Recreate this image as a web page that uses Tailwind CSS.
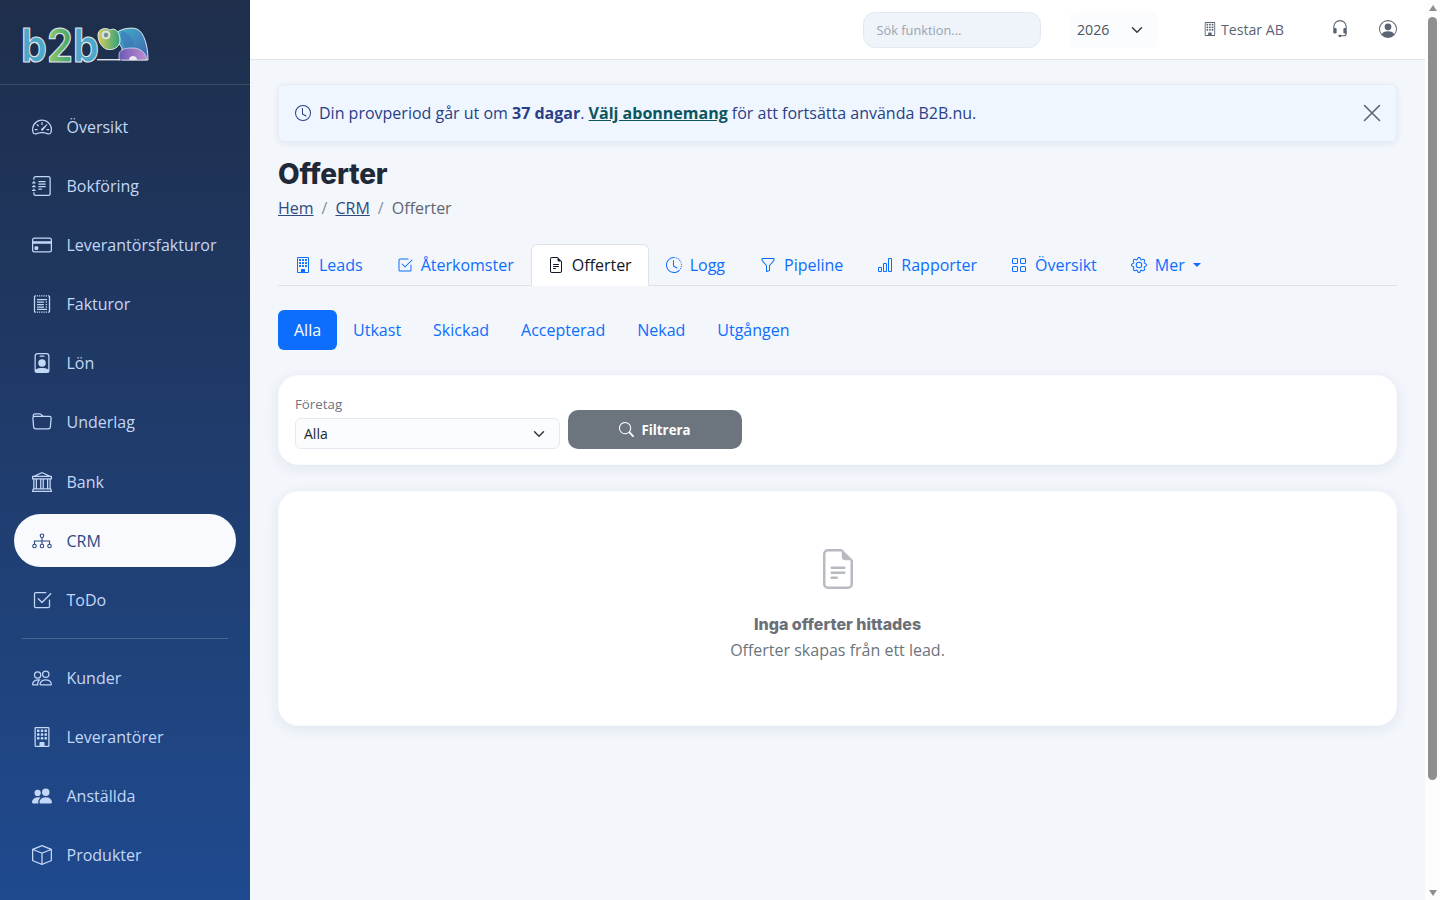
<!DOCTYPE html>
<html lang="sv">
<head>
<meta charset="utf-8">
<title>Offerter</title>
<script src="https://cdn.jsdelivr.net/npm/@tailwindcss/browser@4"></script>
</head>
<body class="font-['Open_Sans',sans-serif] bg-[#f3f6fb]">
<div class="flex h-[900px] w-[1440px] overflow-hidden">

  <!-- Sidebar -->
  <aside class="w-[250px] h-full shrink-0 bg-gradient-to-b from-[#1e2e4b] to-[#1f4a8f] overflow-hidden">
    <div class="h-[85px] border-b border-[#3d4d67] pl-[18px] pt-[13px]">
      <svg width="134" height="64" viewBox="-4 -12 134 64">
        <defs>
          <linearGradient id="lg1" x1="0" y1="0" x2="1" y2="0"><stop offset="0" stop-color="#4ea6c9"/><stop offset=".33" stop-color="#4ea6c9"/><stop offset=".38" stop-color="#8cc46a"/><stop offset=".64" stop-color="#3fa66f"/><stop offset=".68" stop-color="#4ea6c9"/><stop offset="1" stop-color="#4ea6c9"/></linearGradient>
          <linearGradient id="lg2" x1="0" y1="0" x2="1" y2="1"><stop offset="0" stop-color="#45b4c8"/><stop offset="1" stop-color="#3b62b0"/></linearGradient>
          <linearGradient id="lg3" x1="0" y1="0" x2="1" y2="0"><stop offset="0" stop-color="#d6cf56"/><stop offset="1" stop-color="#2f9f7d"/></linearGradient>
          <linearGradient id="lg4" x1="0" y1="0" x2="1" y2="0"><stop offset="0" stop-color="#6d58b8"/><stop offset="1" stop-color="#c08fd0"/></linearGradient>
        </defs>
        <text transform="scale(1.03 1.15)" x="-1" y="32" font-family="Inter, sans-serif" font-weight="700" font-size="40" fill="url(#lg1)" stroke="#dfe5ea" stroke-width="1" stroke-linejoin="round">b2b</text>
        <g transform="translate(0 1)">
          <path d="M92 10 C96 2 110 1 115 3 C122 6 126 20 126 34 L100 34 L100 22 Z" fill="url(#lg2)" stroke="#dfe5ea" stroke-width="1"/>
          <path d="M100 5 C108 8 112 14 112 22 L104 24 L98 10 Z" fill="#3a73b8" opacity=".55"/>
          <path d="M76 9 C76 3 83 1 88 4 C93 1 98 6 98 14 C98 22 90 25 84 23 C80 21 76 16 76 9 Z" fill="url(#lg3)" stroke="#dfe5ea" stroke-width="1"/>
          <circle cx="84" cy="9" r="4" fill="#d8e0c4" stroke="#dfe5ea" stroke-width="1"/>
          <circle cx="84" cy="9" r="2.2" fill="#6f8fa0"/>
          <path d="M97 34 L97 29 C97 24 102 22 110 22 C119 22 124 27 125 34 Z" fill="url(#lg4)" stroke="#dfe5ea" stroke-width=".7"/>
          <path d="M107 34 C107 31 109 30 111 30 C113 30 115 31 115 34 Z" fill="#e9e9ef"/>
          <path d="M75 33.7 L98 33.7" stroke="#dfe5ea" stroke-width="1.4"/>
        </g>
      </svg>
    </div>
    <nav class="px-[14px] pt-[15.1px] text-[16px] text-[#c3d7f7]">
      <a class="flex items-center h-[53.15px] mb-[6px] pl-[18px]">
        <svg class="mr-[14.5px]" width="20" height="20" viewBox="0 0 16 16" fill="currentColor"><path d="M8 4a.5.5 0 0 1 .5.5V6a.5.5 0 0 1-1 0V4.5A.5.5 0 0 1 8 4M3.732 5.732a.5.5 0 0 1 .707 0l.915.914a.5.5 0 1 1-.708.708l-.914-.915a.5.5 0 0 1 0-.707M2 10a.5.5 0 0 1 .5-.5h1.586a.5.5 0 0 1 0 1H2.5A.5.5 0 0 1 2 10m9.5 0a.5.5 0 0 1 .5-.5h1.5a.5.5 0 0 1 0 1H12a.5.5 0 0 1-.5-.5m.754-4.246a.39.39 0 0 0-.527-.02L7.547 9.31a.91.91 0 1 0 1.302 1.258l3.434-4.297a.39.39 0 0 0-.029-.518z"/><path fill-rule="evenodd" d="M0 10a8 8 0 1 1 15.547 2.661c-.442 1.253-1.845 1.602-2.932 1.25C11.309 13.488 9.475 13 8 13c-1.474 0-3.31.488-4.615.911-1.087.352-2.49.003-2.932-1.25A8 8 0 0 1 0 10m8-7a7 7 0 0 0-6.603 9.329c.203.575.923.876 1.68.63C4.397 12.533 6.358 12 8 12s3.604.532 4.923.96c.757.245 1.477-.056 1.68-.631A7 7 0 0 0 8 3"/></svg>
        <span>Översikt</span>
      </a>
      <a class="flex items-center h-[53.15px] mb-[6px] pl-[18px]">
        <svg class="mr-[14.5px]" width="20" height="20" viewBox="0 0 16 16" fill="currentColor"><path d="M5 10.5a.5.5 0 0 1 .5-.5h2a.5.5 0 0 1 0 1h-2a.5.5 0 0 1-.5-.5m0-2a.5.5 0 0 1 .5-.5h5a.5.5 0 0 1 0 1h-5a.5.5 0 0 1-.5-.5m0-2a.5.5 0 0 1 .5-.5h5a.5.5 0 0 1 0 1h-5a.5.5 0 0 1-.5-.5m0-2a.5.5 0 0 1 .5-.5h5a.5.5 0 0 1 0 1h-5a.5.5 0 0 1-.5-.5"/><path d="M3 0h10a2 2 0 0 1 2 2v12a2 2 0 0 1-2 2H3a2 2 0 0 1-2-2v-1h1v1a1 1 0 0 0 1 1h10a1 1 0 0 0 1-1V2a1 1 0 0 0-1-1H3a1 1 0 0 0-1 1v1H1V2a2 2 0 0 1 2-2"/><path d="M1 5v-.5a.5.5 0 0 1 1 0V5h.5a.5.5 0 0 1 0 1h-2a.5.5 0 0 1 0-1zm0 3v-.5a.5.5 0 0 1 1 0V8h.5a.5.5 0 0 1 0 1h-2a.5.5 0 0 1 0-1zm0 3v-.5a.5.5 0 0 1 1 0v.5h.5a.5.5 0 0 1 0 1h-2a.5.5 0 0 1 0-1z"/></svg>
        <span>Bokföring</span>
      </a>
      <a class="flex items-center h-[53.15px] mb-[6px] pl-[18px]">
        <svg class="mr-[14.5px]" width="20" height="20" viewBox="0 0 16 16" fill="currentColor"><path d="M0 4a2 2 0 0 1 2-2h12a2 2 0 0 1 2 2v8a2 2 0 0 1-2 2H2a2 2 0 0 1-2-2zm2-1a1 1 0 0 0-1 1v1h14V4a1 1 0 0 0-1-1zm13 4H1v5a1 1 0 0 0 1 1h12a1 1 0 0 0 1-1z"/><path d="M2 10a1 1 0 0 1 1-1h1a1 1 0 0 1 1 1v1a1 1 0 0 1-1 1H3a1 1 0 0 1-1-1z"/></svg>
        <span>Leverantörsfakturor</span>
      </a>
      <a class="flex items-center h-[53.15px] mb-[6px] pl-[18px]">
        <svg class="mr-[14.5px]" width="20" height="20" viewBox="0 0 16 16" fill="none" stroke="currentColor"><path d="M2 1.5H14M2 14.5H14" stroke-width="1.1" stroke-dasharray="1 .8"/><path d="M2 1.5V14.5M14 1.5V14.5" stroke-width="1"/><path d="M4 4.5H12M4 6.5H9.5M4 8.5H9.5M4 10.5H9.5M4 12.3H12M11 6.5H12M11 8.5H12M11 10.5H12" stroke-width="1"/></svg>
        <span>Fakturor</span>
      </a>
      <a class="flex items-center h-[53.15px] mb-[6px] pl-[18px]">
        <svg class="mr-[14.5px]" width="20" height="20" viewBox="0 0 16 16" fill="currentColor"><path d="M6.5 2a.5.5 0 0 0 0 1h3a.5.5 0 0 0 0-1zM11 8a3 3 0 1 1-6 0 3 3 0 0 1 6 0"/><path d="M4.5 0A2.5 2.5 0 0 0 2 2.5V14a2 2 0 0 0 2 2h8a2 2 0 0 0 2-2V2.5A2.5 2.5 0 0 0 11.5 0zM3 2.5A1.5 1.5 0 0 1 4.5 1h7A1.5 1.5 0 0 1 13 2.5v10.795a4.2 4.2 0 0 0-.776-.492C11.392 12.387 10.063 12 8 12s-3.392.387-4.224.803a4.2 4.2 0 0 0-.776.492z"/></svg>
        <span>Lön</span>
      </a>
      <a class="flex items-center h-[53.15px] mb-[6px] pl-[18px]">
        <svg class="mr-[14.5px]" width="20" height="20" viewBox="0 0 16 16" fill="currentColor"><path d="M.54 3.87.5 3a2 2 0 0 1 2-2h3.672a2 2 0 0 1 1.414.586l.828.828A2 2 0 0 0 9.828 3h3.982a2 2 0 0 1 1.992 2.181l-.637 7A2 2 0 0 1 13.174 14H2.826a2 2 0 0 1-1.991-1.819l-.637-7a2 2 0 0 1 .342-1.31zM2.19 4a1 1 0 0 0-.996 1.09l.637 7a1 1 0 0 0 .995.91h10.348a1 1 0 0 0 .995-.91l.637-7A1 1 0 0 0 13.81 4zm4.69-1.707A1 1 0 0 0 6.172 2H2.5a1 1 0 0 0-1 .981l.006.139q.323-.119.684-.12h5.396z"/></svg>
        <span>Underlag</span>
      </a>
      <a class="flex items-center h-[53.15px] mb-[6px] pl-[18px]">
        <svg class="mr-[14.5px]" width="20" height="20" viewBox="0 0 16 16" fill="currentColor"><path d="m8 0 6.61 3h.89a.5.5 0 0 1 .5.5v2a.5.5 0 0 1-.5.5H15v7a.5.5 0 0 1 .485.38l.5 2a.498.498 0 0 1-.485.62H.5a.498.498 0 0 1-.485-.62l.5-2A.5.5 0 0 1 1 13V6H.5a.5.5 0 0 1-.5-.5v-2A.5.5 0 0 1 .5 3h.89zM3.777 3h8.447L8 1zM2 6v7h1V6zm2 0v7h2.5V6zm3.5 0v7h1V6zm2 0v7H12V6zM13 6v7h1V6zm2-1V4H1v1zm-.39 9H1.39l-.25 1h13.72z"/></svg>
        <span>Bank</span>
      </a>
      <a class="flex items-center h-[53.15px] mb-[6px] pl-[18px] rounded-full bg-[#f8fafd] text-[#2b4a85]">
        <svg class="mr-[14.5px]" width="20" height="20" viewBox="0 0 16 16" fill="none" stroke="currentColor" stroke-width=".9"><circle cx="8" cy="3.8" r="1.4"/><circle cx="2" cy="12" r="1.4"/><circle cx="8" cy="12" r="1.4"/><circle cx="14" cy="12" r="1.4"/><path d="M8 5.2V10.6M2 10.6V8H14V10.6"/></svg>
        <span class="font-medium">CRM</span>
      </a>
      <a class="flex items-center h-[53.15px] pl-[18px]">
        <svg class="mr-[14.5px]" width="20" height="20" viewBox="0 0 16 16" fill="currentColor"><path d="M3 14.5A1.5 1.5 0 0 1 1.5 13V3A1.5 1.5 0 0 1 3 1.5h8a.5.5 0 0 1 0 1H3a.5.5 0 0 0-.5.5v10a.5.5 0 0 0 .5.5h10a.5.5 0 0 0 .5-.5V8a.5.5 0 0 1 1 0v5a1.5 1.5 0 0 1-1.5 1.5z"/><path d="m8.354 10.354 7-7a.5.5 0 0 0-.708-.708L8 9.293 5.354 6.646a.5.5 0 1 0-.708.708l3 3a.5.5 0 0 0 .708 0"/></svg>
        <span>ToDo</span>
      </a>
      <div class="mx-[8px] h-px bg-[#4a6493] mt-[11.5px] mb-[12.4px]"></div>
      <a class="flex items-center h-[53.15px] mb-[6px] pl-[18px]">
        <svg class="mr-[14.5px]" width="20" height="20" viewBox="0 0 16 16" fill="currentColor"><path d="M15 14s1 0 1-1-1-4-5-4-5 3-5 4 1 1 1 1zm-7.978-1L7 12.996c.001-.264.167-1.03.76-1.72C8.312 10.629 9.282 10 11 10c1.717 0 2.687.63 3.24 1.276.593.69.758 1.457.76 1.72l-.008.002-.014.002zM11 7a2 2 0 1 0 0-4 2 2 0 0 0 0 4m3-2a3 3 0 1 1-6 0 3 3 0 0 1 6 0M6.936 9.28a6 6 0 0 0-1.23-.247A7 7 0 0 0 5 9c-4 0-5 3-5 4q0 1 1 1h4.216A2.24 2.24 0 0 1 5 13c0-1.01.377-2.042 1.09-2.904.243-.294.526-.569.846-.816M4.92 10A5.5 5.5 0 0 0 4 13H1c0-.26.164-1.03.76-1.724.545-.636 1.492-1.256 3.16-1.275ZM1.5 5.5a3 3 0 1 1 6 0 3 3 0 0 1-6 0m3-2a2 2 0 1 0 0 4 2 2 0 0 0 0-4"/></svg>
        <span>Kunder</span>
      </a>
      <a class="flex items-center h-[53.15px] mb-[6px] pl-[18px]">
        <svg class="mr-[14.5px]" width="20" height="20" viewBox="0 0 16 16" fill="currentColor"><path d="M4 2.5a.5.5 0 0 1 .5-.5h1a.5.5 0 0 1 .5.5v1a.5.5 0 0 1-.5.5h-1a.5.5 0 0 1-.5-.5zm3 0a.5.5 0 0 1 .5-.5h1a.5.5 0 0 1 .5.5v1a.5.5 0 0 1-.5.5h-1a.5.5 0 0 1-.5-.5zm3.5-.5a.5.5 0 0 0-.5.5v1a.5.5 0 0 0 .5.5h1a.5.5 0 0 0 .5-.5v-1a.5.5 0 0 0-.5-.5zM4 5.5a.5.5 0 0 1 .5-.5h1a.5.5 0 0 1 .5.5v1a.5.5 0 0 1-.5.5h-1a.5.5 0 0 1-.5-.5zM7.5 5a.5.5 0 0 0-.5.5v1a.5.5 0 0 0 .5.5h1a.5.5 0 0 0 .5-.5v-1a.5.5 0 0 0-.5-.5zm2.5.5a.5.5 0 0 1 .5-.5h1a.5.5 0 0 1 .5.5v1a.5.5 0 0 1-.5.5h-1a.5.5 0 0 1-.5-.5zM4.5 8a.5.5 0 0 0-.5.5v1a.5.5 0 0 0 .5.5h1a.5.5 0 0 0 .5-.5v-1a.5.5 0 0 0-.5-.5zm2.5.5a.5.5 0 0 1 .5-.5h1a.5.5 0 0 1 .5.5v1a.5.5 0 0 1-.5.5h-1a.5.5 0 0 1-.5-.5zm3.5-.5a.5.5 0 0 0-.5.5v1a.5.5 0 0 0 .5.5h1a.5.5 0 0 0 .5-.5v-1a.5.5 0 0 0-.5-.5z"/><path d="M2 1a1 1 0 0 1 1-1h10a1 1 0 0 1 1 1v14a1 1 0 0 1-1 1H3a1 1 0 0 1-1-1zm11 0H3v14h3v-2.5a.5.5 0 0 1 .5-.5h3a.5.5 0 0 1 .5.5V15h3z"/></svg>
        <span>Leverantörer</span>
      </a>
      <a class="flex items-center h-[53.15px] mb-[6px] pl-[18px]">
        <svg class="mr-[14.5px]" width="20" height="20" viewBox="0 0 16 16" fill="currentColor"><path d="M7 14s-1 0-1-1 1-4 5-4 5 3 5 4-1 1-1 1zm4-6a3 3 0 1 0 0-6 3 3 0 0 0 0 6m-5.784 6A2.24 2.24 0 0 1 5 13c0-1.355.68-2.75 1.936-3.72A6.3 6.3 0 0 0 5 9c-4 0-5 3-5 4s1 1 1 1zM4.5 8a2.5 2.5 0 1 0 0-5 2.5 2.5 0 0 0 0 5"/></svg>
        <span>Anställda</span>
      </a>
      <a class="flex items-center h-[53.15px] mb-[6px] pl-[18px]">
        <svg class="mr-[14.5px]" width="20" height="20" viewBox="0 0 16 16" fill="currentColor"><path d="M8.186 1.113a.5.5 0 0 0-.372 0L1.846 3.5 8 5.961 14.154 3.5zM15 4.239l-6.5 2.6v7.922l6.5-2.6V4.24zM7.5 14.762V6.838L1 4.239v7.925zM7.443.184a1.5 1.5 0 0 1 1.114 0l7.129 2.852A.5.5 0 0 1 16 3.5v8.662a1 1 0 0 1-.629.928l-7.185 2.874a.5.5 0 0 1-.372 0L.63 13.09a1 1 0 0 1-.63-.928V3.5a.5.5 0 0 1 .314-.464z"/></svg>
        <span>Produkter</span>
      </a>
    </nav>
  </aside>

  <!-- Main -->
  <div class="w-[1175px] h-full shrink-0 overflow-hidden">
    <header class="h-[60px] bg-white border-b border-[#e2e6ec] flex items-center">
      <div class="ml-[613px] w-[178px] h-[36px] rounded-[12px] bg-[#eff3fa] border border-[#e3e8f1] flex items-center pl-[12.5px] pt-[2px] text-[12.8px] text-[#9aa3b2]">Sök funktion...</div>
      <div class="ml-[28px] w-[88px] h-[36px] rounded-[6px] bg-[#fbfcfe] flex items-center pl-[8px] text-[14.2px] text-[#4b5563]">
        <span>2026</span>
        <svg class="ml-[21.5px]" width="12" height="12" viewBox="0 0 16 16" fill="none" stroke="#343a40" stroke-width="2" stroke-linecap="round" stroke-linejoin="round"><path d="M2 5l6 6 6-6"/></svg>
      </div>
      <div class="ml-[46px] w-[81px] flex items-center whitespace-nowrap text-[14.2px] text-[#5b6472]">
        <svg class="mr-[4px]" width="14" height="14" viewBox="0 0 16 16" fill="currentColor"><path d="M4 2.5a.5.5 0 0 1 .5-.5h1a.5.5 0 0 1 .5.5v1a.5.5 0 0 1-.5.5h-1a.5.5 0 0 1-.5-.5zm3 0a.5.5 0 0 1 .5-.5h1a.5.5 0 0 1 .5.5v1a.5.5 0 0 1-.5.5h-1a.5.5 0 0 1-.5-.5zm3.5-.5a.5.5 0 0 0-.5.5v1a.5.5 0 0 0 .5.5h1a.5.5 0 0 0 .5-.5v-1a.5.5 0 0 0-.5-.5zM4 5.5a.5.5 0 0 1 .5-.5h1a.5.5 0 0 1 .5.5v1a.5.5 0 0 1-.5.5h-1a.5.5 0 0 1-.5-.5zM7.5 5a.5.5 0 0 0-.5.5v1a.5.5 0 0 0 .5.5h1a.5.5 0 0 0 .5-.5v-1a.5.5 0 0 0-.5-.5zm2.5.5a.5.5 0 0 1 .5-.5h1a.5.5 0 0 1 .5.5v1a.5.5 0 0 1-.5.5h-1a.5.5 0 0 1-.5-.5zM4.5 8a.5.5 0 0 0-.5.5v1a.5.5 0 0 0 .5.5h1a.5.5 0 0 0 .5-.5v-1a.5.5 0 0 0-.5-.5zm2.5.5a.5.5 0 0 1 .5-.5h1a.5.5 0 0 1 .5.5v1a.5.5 0 0 1-.5.5h-1a.5.5 0 0 1-.5-.5zm3.5-.5a.5.5 0 0 0-.5.5v1a.5.5 0 0 0 .5.5h1a.5.5 0 0 0 .5-.5v-1a.5.5 0 0 0-.5-.5z"/><path d="M2 1a1 1 0 0 1 1-1h10a1 1 0 0 1 1 1v14a1 1 0 0 1-1 1H3a1 1 0 0 1-1-1zm11 0H3v14h3v-2.5a.5.5 0 0 1 .5-.5h3a.5.5 0 0 1 .5.5V15h3z"/></svg>
        <span>Testar AB</span>
      </div>
      <svg class="ml-[47px] -mt-[2px]" width="18" height="18" viewBox="0 0 16 16" fill="#5b6472"><path d="M8 1a5 5 0 0 0-5 5v1h1a1 1 0 0 1 1 1v3a1 1 0 0 1-1 1H3a1 1 0 0 1-1-1V6a6 6 0 1 1 12 0v6a2.5 2.5 0 0 1-2.5 2.5H9.366a1 1 0 0 1-.866.5h-1a1 1 0 1 1 0-2h1a1 1 0 0 1 .866.5H11.5A1.5 1.5 0 0 0 13 12h-1a1 1 0 0 1-1-1V8a1 1 0 0 1 1-1h1V6a5 5 0 0 0-5-5"/></svg>
      <svg class="ml-[30px] -mt-[2px]" width="18" height="18" viewBox="0 0 16 16" fill="#5b6472"><path d="M11 6a3 3 0 1 1-6 0 3 3 0 0 1 6 0"/><path fill-rule="evenodd" d="M0 8a8 8 0 1 1 16 0A8 8 0 0 1 0 8m8-7a7 7 0 0 0-5.468 11.37C3.242 11.226 4.805 10 8 10s4.757 1.225 5.468 2.37A7 7 0 0 0 8 1"/></svg>
    </header>

    <main class="px-[28px] pt-[24px]">
      <!-- Alert -->
      <div class="h-[58px] rounded-[6px] bg-[#eff6ff] border border-[#e8edf4] shadow-[0_2px_6px_rgba(30,58,110,0.08)] flex items-center pl-[16px] pr-[14px] text-[16px] text-[#2a3f86]">
        <svg class="mr-[8px]" width="16" height="16" viewBox="0 0 16 16" fill="currentColor"><path d="M8 3.5a.5.5 0 0 0-1 0V9a.5.5 0 0 0 .252.434l3.5 2a.5.5 0 0 0 .496-.868L8 8.71z"/><path d="M8 16A8 8 0 1 0 8 0a8 8 0 0 0 0 16m7-8A7 7 0 1 1 1 8a7 7 0 0 1 14 0"/></svg>
        <span class="whitespace-pre">Din provperiod går ut om <b class="font-bold">37 dagar</b>. <a class="font-bold text-[#0b5560] underline">Välj abonnemang</a> för att fortsätta använda B2B.nu.</span>
        <svg class="ml-auto" width="20" height="20" viewBox="0 0 16 16" fill="none" stroke="#5f6670" stroke-width="1.3" stroke-linecap="round"><path d="M2 2l12 12M14 2L2 14"/></svg>
      </div>

      <h1 class="mt-[14px] h-[36px] leading-[36px] text-[28px] font-extrabold tracking-[-0.2px] text-[#1f2937] font-['Inter',sans-serif]">Offerter</h1>
      <nav class="mt-[4px] h-[24px] leading-[24px] text-[16px] flex text-[#5f6670]">
        <a class="text-[#2f4a80] underline">Hem</a><span class="px-[8px] text-[#8a919b]">/</span><a class="text-[#2f4a80] underline">CRM</a><span class="px-[8px] text-[#8a919b]">/</span><span>Offerter</span>
      </nav>

      <!-- Tabs -->
      <div class="mt-[24px] h-[42px] border-b border-[#dee2e6] flex text-[16px] text-[#0d6efd]">
        <a class="h-[42px] flex items-center px-[17px]">
          <svg class="mr-[8px]" width="16" height="16" viewBox="0 0 16 16" fill="currentColor"><path d="M4 2.5a.5.5 0 0 1 .5-.5h1a.5.5 0 0 1 .5.5v1a.5.5 0 0 1-.5.5h-1a.5.5 0 0 1-.5-.5zm3 0a.5.5 0 0 1 .5-.5h1a.5.5 0 0 1 .5.5v1a.5.5 0 0 1-.5.5h-1a.5.5 0 0 1-.5-.5zm3.5-.5a.5.5 0 0 0-.5.5v1a.5.5 0 0 0 .5.5h1a.5.5 0 0 0 .5-.5v-1a.5.5 0 0 0-.5-.5zM4 5.5a.5.5 0 0 1 .5-.5h1a.5.5 0 0 1 .5.5v1a.5.5 0 0 1-.5.5h-1a.5.5 0 0 1-.5-.5zM7.5 5a.5.5 0 0 0-.5.5v1a.5.5 0 0 0 .5.5h1a.5.5 0 0 0 .5-.5v-1a.5.5 0 0 0-.5-.5zm2.5.5a.5.5 0 0 1 .5-.5h1a.5.5 0 0 1 .5.5v1a.5.5 0 0 1-.5.5h-1a.5.5 0 0 1-.5-.5zM4.5 8a.5.5 0 0 0-.5.5v1a.5.5 0 0 0 .5.5h1a.5.5 0 0 0 .5-.5v-1a.5.5 0 0 0-.5-.5zm2.5.5a.5.5 0 0 1 .5-.5h1a.5.5 0 0 1 .5.5v1a.5.5 0 0 1-.5.5h-1a.5.5 0 0 1-.5-.5zm3.5-.5a.5.5 0 0 0-.5.5v1a.5.5 0 0 0 .5.5h1a.5.5 0 0 0 .5-.5v-1a.5.5 0 0 0-.5-.5z"/><path d="M2 1a1 1 0 0 1 1-1h10a1 1 0 0 1 1 1v14a1 1 0 0 1-1 1H3a1 1 0 0 1-1-1zm11 0H3v14h3v-2.5a.5.5 0 0 1 .5-.5h3a.5.5 0 0 1 .5.5V15h3z"/></svg>
          Leads
        </a>
        <a class="h-[42px] flex items-center px-[17px]">
          <svg class="mr-[8px]" width="16" height="16" viewBox="0 0 16 16" fill="currentColor"><path d="M3 14.5A1.5 1.5 0 0 1 1.5 13V3A1.5 1.5 0 0 1 3 1.5h8a.5.5 0 0 1 0 1H3a.5.5 0 0 0-.5.5v10a.5.5 0 0 0 .5.5h10a.5.5 0 0 0 .5-.5V8a.5.5 0 0 1 1 0v5a1.5 1.5 0 0 1-1.5 1.5z"/><path d="m8.354 10.354 7-7a.5.5 0 0 0-.708-.708L8 9.293 5.354 6.646a.5.5 0 1 0-.708.708l3 3a.5.5 0 0 0 .708 0"/></svg>
          Återkomster
        </a>
        <a class="h-[42px] flex items-center px-[16px] bg-white border border-[#dee2e6] border-b-white rounded-t-[6px] text-[#111827]">
          <svg class="mr-[8px]" width="16" height="16" viewBox="0 0 16 16" fill="currentColor"><path d="M5.5 7a.5.5 0 0 0 0 1h5a.5.5 0 0 0 0-1zM5 9.5a.5.5 0 0 1 .5-.5h5a.5.5 0 0 1 0 1h-5a.5.5 0 0 1-.5-.5m0 2a.5.5 0 0 1 .5-.5h2a.5.5 0 0 1 0 1h-2a.5.5 0 0 1-.5-.5"/><path d="M9.5 0H4a2 2 0 0 0-2 2v12a2 2 0 0 0 2 2h8a2 2 0 0 0 2-2V4.5zm0 1v2A1.5 1.5 0 0 0 11 4.5h2V14a1 1 0 0 1-1 1H4a1 1 0 0 1-1-1V2a1 1 0 0 1 1-1z"/></svg>
          Offerter
        </a>
        <a class="h-[42px] flex items-center pl-[17px] pr-[18px]">
          <svg class="mr-[8px]" width="16" height="16" viewBox="0 0 16 16" fill="currentColor"><path d="M8.515 1.019A7 7 0 0 0 8 1V0a8 8 0 0 1 .589.022zm2.004.45a7 7 0 0 0-.985-.299l.219-.976q.576.129 1.126.342zm1.37.71a7 7 0 0 0-.439-.27l.493-.87a8 8 0 0 1 .979.654l-.615.789a7 7 0 0 0-.418-.302zm1.834 1.79a7 7 0 0 0-.653-.796l.724-.69q.406.429.747.91zm.744 1.352a7 7 0 0 0-.214-.468l.893-.45a8 8 0 0 1 .45 1.088l-.95.313a7 7 0 0 0-.179-.483m.53 2.507a7 7 0 0 0-.1-1.025l.985-.17q.1.58.116 1.17zm-.131 1.538q.05-.254.081-.51l.993.123a8 8 0 0 1-.23 1.155l-.964-.267q.069-.247.12-.501m-.952 2.379q.276-.436.486-.908l.914.405q-.24.54-.555 1.038zm-.964 1.205q.183-.183.35-.378l.758.653a8 8 0 0 1-.401.432z"/><path d="M8 1a7 7 0 1 0 4.95 11.95l.707.707A8.001 8.001 0 1 1 8 0z"/><path d="M7.5 3a.5.5 0 0 1 .5.5v5.21l3.248 1.856a.5.5 0 0 1-.496.868l-3.5-2A.5.5 0 0 1 7 9V3.5a.5.5 0 0 1 .5-.5"/></svg>
          Logg
        </a>
        <a class="h-[42px] flex items-center px-[17px]">
          <svg class="mr-[8px]" width="16" height="16" viewBox="0 0 16 16" fill="currentColor"><path d="M1.5 1.5A.5.5 0 0 1 2 1h12a.5.5 0 0 1 .5.5v2a.5.5 0 0 1-.128.334L10 8.692V13.5a.5.5 0 0 1-.342.474l-3 1A.5.5 0 0 1 6 14.5V8.692L1.628 3.834A.5.5 0 0 1 1.5 3.5zm1 .5v1.308l4.372 4.858A.5.5 0 0 1 7 8.5v5.306l2-.666V8.5a.5.5 0 0 1 .128-.334L13.5 3.308V2z"/></svg>
          Pipeline
        </a>
        <a class="h-[42px] flex items-center px-[17px]">
          <svg class="mr-[8px]" width="16" height="16" viewBox="0 0 16 16" fill="currentColor"><path d="M4 11H2v3h2zm5-4H7v7h2zm5-5v12h-2V2zm-2-1a1 1 0 0 0-1 1v12a1 1 0 0 0 1 1h2a1 1 0 0 0 1-1V2a1 1 0 0 0-1-1zM6 7a1 1 0 0 1 1-1h2a1 1 0 0 1 1 1v7a1 1 0 0 1-1 1H7a1 1 0 0 1-1-1zm-5 4a1 1 0 0 1 1-1h2a1 1 0 0 1 1 1v3a1 1 0 0 1-1 1H2a1 1 0 0 1-1-1z"/></svg>
          Rapporter
        </a>
        <a class="h-[42px] flex items-center px-[17px]">
          <svg class="mr-[8px]" width="16" height="16" viewBox="0 0 16 16" fill="currentColor"><path d="M1 2.5A1.5 1.5 0 0 1 2.5 1h3A1.5 1.5 0 0 1 7 2.5v3A1.5 1.5 0 0 1 5.5 7h-3A1.5 1.5 0 0 1 1 5.5zM2.5 2a.5.5 0 0 0-.5.5v3a.5.5 0 0 0 .5.5h3a.5.5 0 0 0 .5-.5v-3a.5.5 0 0 0-.5-.5zm6.5.5A1.5 1.5 0 0 1 10.5 1h3A1.5 1.5 0 0 1 15 2.5v3A1.5 1.5 0 0 1 13.5 7h-3A1.5 1.5 0 0 1 9 5.5zm1.5-.5a.5.5 0 0 0-.5.5v3a.5.5 0 0 0 .5.5h3a.5.5 0 0 0 .5-.5v-3a.5.5 0 0 0-.5-.5zM1 10.5A1.5 1.5 0 0 1 2.5 9h3A1.5 1.5 0 0 1 7 10.5v3A1.5 1.5 0 0 1 5.5 15h-3A1.5 1.5 0 0 1 1 13.5zm1.5-.5a.5.5 0 0 0-.5.5v3a.5.5 0 0 0 .5.5h3a.5.5 0 0 0 .5-.5v-3a.5.5 0 0 0-.5-.5zm6.5.5A1.5 1.5 0 0 1 10.5 9h3a1.5 1.5 0 0 1 1.5 1.5v3a1.5 1.5 0 0 1-1.5 1.5h-3A1.5 1.5 0 0 1 9 13.5zm1.5-.5a.5.5 0 0 0-.5.5v3a.5.5 0 0 0 .5.5h3a.5.5 0 0 0 .5-.5v-3a.5.5 0 0 0-.5-.5z"/></svg>
          Översikt
        </a>
        <a class="h-[42px] flex items-center px-[17px]">
          <svg class="mr-[8px]" width="16" height="16" viewBox="0 0 16 16" fill="currentColor"><path d="M8 4.754a3.246 3.246 0 1 0 0 6.492 3.246 3.246 0 0 0 0-6.492M5.754 8a2.246 2.246 0 1 1 4.492 0 2.246 2.246 0 0 1-4.492 0"/><path d="M9.796 1.343c-.527-1.79-3.065-1.79-3.592 0l-.094.319a.873.873 0 0 1-1.255.52l-.292-.16c-1.64-.892-3.433.902-2.54 2.541l.159.292a.873.873 0 0 1-.52 1.255l-.319.094c-1.79.527-1.79 3.065 0 3.592l.319.094a.873.873 0 0 1 .52 1.255l-.16.292c-.892 1.64.901 3.434 2.541 2.54l.292-.159a.873.873 0 0 1 1.255.52l.094.319c.527 1.79 3.065 1.79 3.592 0l.094-.319a.873.873 0 0 1 1.255-.52l.292.16c1.64.893 3.434-.902 2.54-2.541l-.159-.292a.873.873 0 0 1 .52-1.255l.319-.094c1.79-.527 1.79-3.065 0-3.592l-.319-.094a.873.873 0 0 1-.52-1.255l.16-.292c.893-1.64-.902-3.433-2.541-2.54l-.292.159a.873.873 0 0 1-1.255-.52zm-2.633.283c.246-.835 1.428-.835 1.674 0l.094.319a1.873 1.873 0 0 0 2.693 1.115l.291-.16c.764-.415 1.6.42 1.184 1.185l-.159.292a1.873 1.873 0 0 0 1.116 2.692l.318.094c.835.246.835 1.428 0 1.674l-.319.094a1.873 1.873 0 0 0-1.115 2.693l.16.291c.415.764-.42 1.6-1.185 1.184l-.291-.159a1.873 1.873 0 0 0-2.693 1.116l-.094.318c-.246.835-1.428.835-1.674 0l-.094-.319a1.873 1.873 0 0 0-2.692-1.115l-.292.16c-.764.415-1.6-.42-1.184-1.185l.159-.291A1.873 1.873 0 0 0 1.945 8.93l-.319-.094c-.835-.246-.835-1.428 0-1.674l.319-.094A1.873 1.873 0 0 0 3.06 4.377l-.16-.292c-.415-.764.42-1.6 1.185-1.184l.292.159a1.873 1.873 0 0 0 2.692-1.115z"/></svg>
          Mer
          <span class="ml-[8px] w-0 h-0 border-x-[4.8px] border-x-transparent border-t-[4.8px] border-t-[#0d6efd]"></span>
        </a>
      </div>

      <!-- Status pills -->
      <div class="mt-[24px] h-[40px] flex text-[16px] text-[#0d6efd]">
        <a class="h-[40px] flex items-center px-[16px] rounded-[6px] bg-[#0d6efd] text-white">Alla</a>
        <a class="h-[40px] flex items-center px-[16px]">Utkast</a>
        <a class="h-[40px] flex items-center px-[16px]">Skickad</a>
        <a class="h-[40px] flex items-center px-[16px]">Accepterad</a>
        <a class="h-[40px] flex items-center px-[16px]">Nekad</a>
        <a class="h-[40px] flex items-center px-[16px]">Utgången</a>
      </div>

      <!-- Filter card -->
      <div class="mt-[25px] h-[90px] rounded-[20px] bg-white border border-[#fafbfd] shadow-[0_3px_14px_rgba(30,58,110,0.09)] px-[16px] pt-[19px] flex items-start gap-[8px]">
        <div class="w-[265px]">
          <div class="h-[18px] leading-[18px] text-[13.3px] text-[#6c757d] mb-[5px]">Företag</div>
          <div class="h-[31px] rounded-[6px] bg-[#fbfcfe] border border-[#e5e9f2] flex items-center justify-between pl-[8px] pr-[14px] text-[14px] text-[#212529]">
            <span>Alla</span>
            <svg width="12" height="12" viewBox="0 0 16 16" fill="none" stroke="#343a40" stroke-width="2" stroke-linecap="round" stroke-linejoin="round"><path d="M2 5l6 6 6-6"/></svg>
          </div>
        </div>
        <button class="mt-[15px] w-[174px] h-[39px] rounded-[10px] bg-[#6c757d] text-white text-[13.3px] font-bold flex items-center justify-center">
          <svg class="mr-[7px]" width="15" height="15" viewBox="0 0 16 16" fill="currentColor"><path d="M11.742 10.344a6.5 6.5 0 1 0-1.397 1.398h-.001q.044.06.098.115l3.85 3.85a1 1 0 0 0 1.415-1.414l-3.85-3.85a1 1 0 0 0-.115-.1zM12 6.5a5.5 5.5 0 1 1-11 0 5.5 5.5 0 0 1 11 0"/></svg>
          <span class="pt-[2px]">Filtrera</span>
        </button>
      </div>

      <!-- Empty card -->
      <div class="mt-[26px] h-[235px] rounded-[20px] bg-white border border-[#fafbfd] shadow-[0_3px_14px_rgba(30,58,110,0.09)] flex flex-col items-center pt-[57px]">
        <svg width="40" height="40" viewBox="0 0 16 16" fill="#b7bac2"><path d="M5.5 7a.5.5 0 0 0 0 1h5a.5.5 0 0 0 0-1zM5 9.5a.5.5 0 0 1 .5-.5h5a.5.5 0 0 1 0 1h-5a.5.5 0 0 1-.5-.5m0 2a.5.5 0 0 1 .5-.5h2a.5.5 0 0 1 0 1h-2a.5.5 0 0 1-.5-.5"/><path d="M9.5 0H4a2 2 0 0 0-2 2v12a2 2 0 0 0 2 2h8a2 2 0 0 0 2-2V4.5zm0 1v2A1.5 1.5 0 0 0 11 4.5h2V14a1 1 0 0 1-1 1H4a1 1 0 0 1-1-1V2a1 1 0 0 1 1-1z"/></svg>
        <div class="mt-[23px] h-[24px] leading-[24px] text-[16px] font-extrabold text-[#6b7078] font-['Inter',sans-serif]">Inga offerter hittades</div>
        <div class="mt-[2px] h-[24px] leading-[24px] text-[16px] text-[#6c757d]">Offerter skapas från ett lead.</div>
      </div>
    </main>
  </div>

  <!-- Scrollbar -->
  <div class="w-[15px] h-full shrink-0 bg-[#fdfdfd] flex flex-col items-center">
    <div class="mt-[5px] w-0 h-0 border-x-[4.5px] border-x-transparent border-b-[6px] border-b-[#8f8f8f]"></div>
    <div class="mt-[6px] w-[9px] h-[763px] rounded-full bg-[#8f8f8f]"></div>
    <div class="mt-auto mb-[4px] w-0 h-0 border-x-[4.5px] border-x-transparent border-t-[6px] border-t-[#8f8f8f]"></div>
  </div>
</div>
</body>
</html>
